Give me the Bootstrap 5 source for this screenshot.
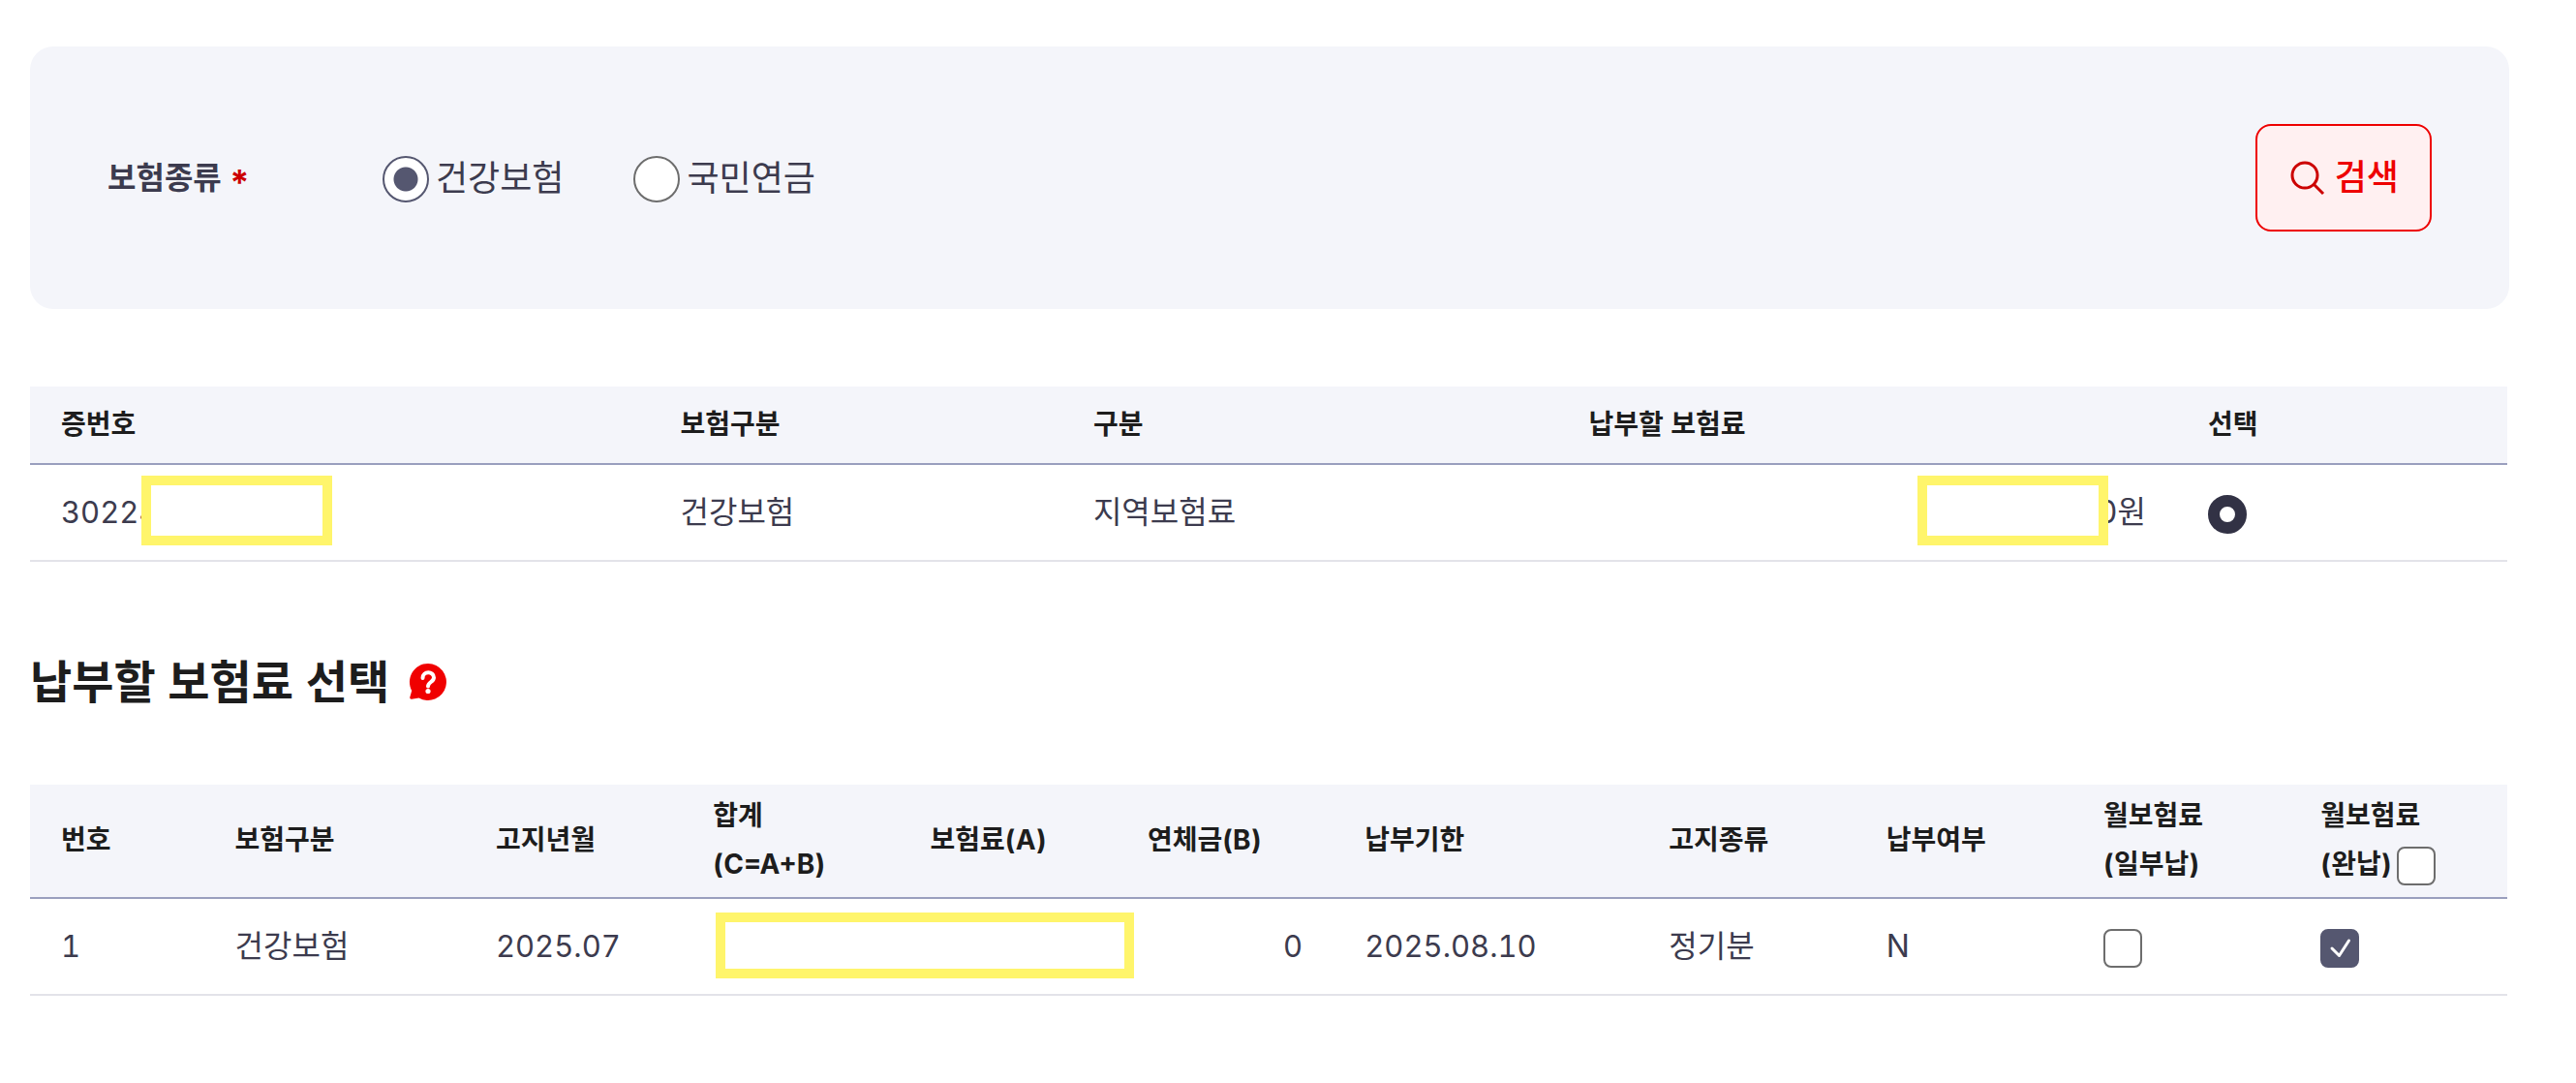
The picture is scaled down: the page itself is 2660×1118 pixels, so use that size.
<!DOCTYPE html>
<html lang="ko">
<head>
<meta charset="utf-8">
<meta name="viewport" content="width=device-width, initial-scale=1">
<title>납부할 보험료 선택</title>
<link href="https://cdn.jsdelivr.net/npm/bootstrap@5.3.0/dist/css/bootstrap.min.css" rel="stylesheet">
<style>
  body { font-family: Inter, "Noto Sans CJK KR", sans-serif; font-size: 32px; line-height: 50px; color: #3c3b4e; background: #fff; font-variant-numeric: tabular-nums; }
  .page-wrap { padding: 48px 71px 48px 31px; }
  .search-panel { background: #f4f5fa; border-radius: 24px; padding: 80px; margin-right: -2px; }
  .field-name { font-weight: 700; min-width: 284px; }
  .required-mark { color: #c00; font-size: 36px; padding-top: 8px; margin-left: 7px; }
  .radio-group { gap: 72px; font-size: 36px; }
  .radio-group label { gap: 7px; }
  .form-check-input { float: none; margin: 0; flex: none; background-color: #fff; border: 2px solid #6d6d6d; box-shadow: none; }
  .form-check-input.pick { width: 48px; height: 48px; margin-top: 2px; }
  .form-check-input.pick:checked { background: radial-gradient(circle, #555770 12px, #fff 13px); border-color: #555770; }
  .form-check-input.tick { width: 40px; height: 40px; border-radius: 8px; vertical-align: middle; }
  .form-check-input.tick:checked { background-color: #555770; border-color: #555770; background-size: 40px 40px; background-position: center;
    background-image: url("data:image/svg+xml,%3csvg xmlns='http://www.w3.org/2000/svg' viewBox='0 0 40 40'%3e%3cpath fill='none' stroke='%23fff' stroke-width='3' stroke-linecap='round' stroke-linejoin='round' d='M12 20l7.500 7.500L29.500 12'/%3e%3c/svg%3e"); }
  .form-check-input.row-pick { width: 40px; height: 40px; }
  .form-check-input.row-pick:checked { background: #fff; border: 12px solid #323245; }
  .btn-search { --bs-btn-color: #e00; --bs-btn-bg: #fff0f1; --bs-btn-border-color: #e00; --bs-btn-hover-color: #e00; --bs-btn-hover-bg: #ffe3e5; --bs-btn-hover-border-color: #e00;
    border-width: 2px; border-radius: 16px; padding: 28px 32px; gap: 8px; font-size: 36px; line-height: 51px; font-weight: 500; }
  .fee-table { table-layout: fixed; margin: 0; color: inherit; --bs-table-bg: transparent; }
  .fee-table th { background: #f4f5fa; color: #1d1d1d; font-size: 28px; font-weight: 700; padding: 7px 30px 9px 32px; border-bottom: 2px solid #9a9fbe; vertical-align: middle; }
  .fee-table td { color: #3c3b4e; padding: 24px 32px; border-bottom: 2px solid #e3e3e9; vertical-align: middle; height: 100px; }
  .fee-table td.digits { font-size: 31px; }
  .fee-table .form-check-input { display: block; margin-top: 4px; }
  .all-pick { gap: 5px; }
  .license-table { margin-top: 80px; }
  .license-table th { padding-top: 14px; padding-bottom: 15px; }
  .section-title { font-size: 47px; line-height: 64px; font-weight: 700; color: #1d1d1d; margin: 92px 0 74px; gap: 20px; }
  .masked { position: absolute; border: 10px solid #fff56b; background: #fff; width: 197px; height: 72px; top: 11px; left: 115px; }
  .masked-amount { left: auto; right: 71px; }
  .masked-wide { width: 432px; height: 68px; top: 14px; left: 35px; z-index: 1; }
</style>
</head>
<body>
<main class="page-wrap">
  <form class="search-panel d-flex align-items-center justify-content-between">
    <div class="d-flex align-items-center" role="radiogroup" aria-labelledby="kind">
      <div class="field-name d-flex align-items-center" id="kind">보험종류<span class="required-mark">*</span></div>
      <div class="radio-group d-flex">
        <label class="d-flex align-items-center" for="health"><input class="form-check-input pick" type="radio" name="kind" id="health" checked>건강보험</label>
        <label class="d-flex align-items-center" for="pension"><input class="form-check-input pick" type="radio" name="kind" id="pension">국민연금</label>
      </div>
    </div>
    <button type="button" class="btn btn-search d-inline-flex align-items-center">
      <svg width="40" height="40" viewBox="0 0 40 40" fill="none" stroke="#c00" stroke-width="3" aria-hidden="true"><circle cx="17" cy="17" r="13"/><path d="M26 26l10 10"/></svg>검색
    </button>
  </form>

  <table class="table fee-table license-table">
    <colgroup><col style="width:25%"><col style="width:16.67%"><col style="width:20%"><col style="width:25%"><col></colgroup>
    <thead><tr><th scope="col">증번호</th><th scope="col">보험구분</th><th scope="col">구분</th><th scope="col">납부할 보험료</th><th scope="col">선택</th></tr></thead>
    <tbody>
      <tr>
        <td class="position-relative digits">30224<span class="masked"></span></td>
        <td>건강보험</td>
        <td>지역보험료</td>
        <td class="position-relative text-end"><span class="masked masked-amount"></span>0원</td>
        <td><input class="form-check-input row-pick" type="radio" name="license" aria-label="선택" checked></td>
      </tr>
    </tbody>
  </table>

  <h2 class="section-title d-flex align-items-center">납부할 보험료 선택
    <svg width="40" height="40" viewBox="0 0 40 40" role="img" aria-label="도움말"><path fill="#f00000" d="M20 1a19 19 0 1 1-9.500 35.500L3 37.800Q1 38 1.200 36L3.200 29A19 19 0 0 1 20 1z"/><path d="M14.500 16c0-7.500 11.500-7.500 11.500-.500 0 4.500-6 4.500-6 9" fill="none" stroke="#fff" stroke-width="4" stroke-linecap="round"/><circle cx="20" cy="29.500" r="2.600" fill="#fff"/></svg>
  </h2>

  <table class="table fee-table">
    <colgroup><col style="width:7.02%"><col style="width:10.53%"><col style="width:8.77%"><col style="width:8.77%"><col style="width:8.77%"><col style="width:8.77%"><col style="width:12.28%"><col style="width:8.77%"><col style="width:8.77%"><col style="width:8.77%"><col></colgroup>
    <thead>
      <tr>
        <th scope="col">번호</th><th scope="col">보험구분</th><th scope="col">고지년월</th><th scope="col">합계<br>(C=A+B)</th><th scope="col">보험료(A)</th><th scope="col">연체금(B)</th><th scope="col">납부기한</th><th scope="col">고지종류</th><th scope="col">납부여부</th><th scope="col">월보험료<br>(일부납)</th>
        <th scope="col"><label for="all">월보험료<br><span class="all-pick d-flex align-items-center">(완납)<input class="form-check-input tick" type="checkbox" id="all"></span></label></th>
      </tr>
    </thead>
    <tbody>
      <tr>
        <td class="digits">1</td><td>건강보험</td><td class="digits">2025.07</td>
        <td class="position-relative"><span class="masked masked-wide"></span></td>
        <td></td>
        <td class="digits text-end">0</td><td class="digits">2025.08.10</td><td>정기분</td><td>N</td>
        <td><input class="form-check-input tick" type="checkbox" aria-label="월보험료 일부납"></td>
        <td><input class="form-check-input tick" type="checkbox" aria-label="월보험료 완납" checked></td>
      </tr>
    </tbody>
  </table>
</main>
<script src="https://cdn.jsdelivr.net/npm/bootstrap@5.3.0/dist/js/bootstrap.bundle.min.js"></script>
</body>
</html>
